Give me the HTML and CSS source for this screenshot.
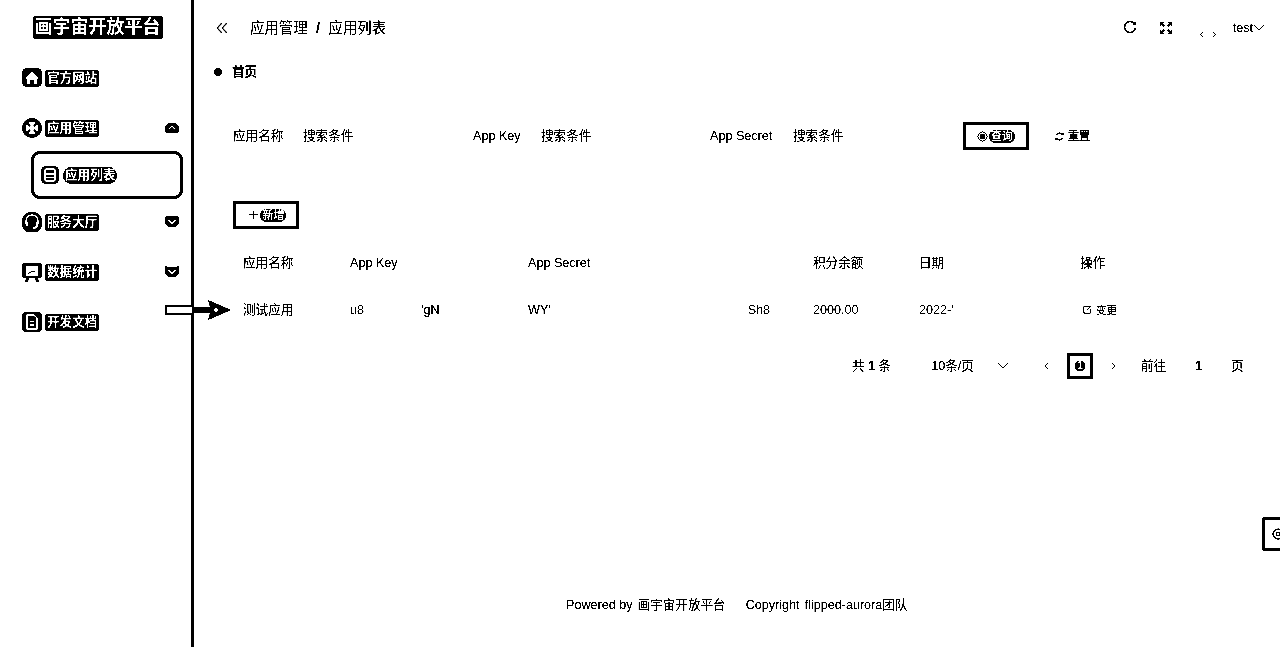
FILE: index.html
```html
<!DOCTYPE html>
<html lang="zh-CN">
<head>
    <meta charset="UTF-8">
    <meta name="viewport" content="width=device-width, initial-scale=1.0">
    <title>画宇宙开放平台</title>
    <link rel="stylesheet" href="styles.css">
</head>
<body>
    <div class="layout">
        <aside class="sidebar">
            <div class="logo"><span>画宇宙开放平台</span></div>
            <nav class="menu">
                <div class="menu-item">
                    <svg class="menu-icon" viewBox="0 0 20 20"><rect x="0" y="0" width="20" height="19" rx="5" fill="#000"/><path d="M3 10 L10 3.500 L17 10 L15 11 V16 H12 V12 H8 V16 H5 V11 Z" fill="#fff"/></svg>
                    <span class="menu-text">官方网站</span>
                </div>
                <div class="menu-item">
                    <svg class="menu-icon" viewBox="0 0 20 20"><circle cx="10" cy="10" r="10" fill="#000"/><circle cx="10" cy="10" r="6.500" fill="#fff"/><path d="M5.500 5.500 L8 8 M14.500 5.500 L12 8 M5.500 14.500 L8 12 M14.500 14.500 L12 12" stroke="#000" stroke-width="2"/></svg>
                    <span class="menu-text">应用管理</span>
                    <svg class="menu-arrow" viewBox="0 0 14 12"><path d="M0 5 L4 1 H10 L14 5 V9 L12 11 H2 L0 9 Z" fill="#000"/><path d="M3.500 7.500 L7 4 L10.500 7.500" fill="none" stroke="#fff" stroke-width="1.500"/></svg>
                </div>
                <div class="submenu-item">
                    <svg class="sub-icon" viewBox="0 0 18 18"><rect x="0" y="0" width="18" height="18" rx="5" fill="#000"/><rect x="4" y="3" width="10" height="12" rx="1" fill="none" stroke="#fff" stroke-width="1.500"/><path d="M4 8 H14 M4 11.500 H14" stroke="#fff" stroke-width="1.500"/></svg>
                    <span class="menu-text pill">应用列表</span>
                </div>
                <div class="menu-item">
                    <svg class="menu-icon" viewBox="0 0 20 20"><rect x="0" y="0" width="20" height="21" rx="9" fill="#000"/><path d="M4 12 V9 A6 6 0 0 1 16 9 V12" fill="none" stroke="#fff" stroke-width="1.500"/><path d="M5 10 V14 M15 10 V13 Q15 16 11 16" fill="none" stroke="#fff" stroke-width="2"/></svg>
                    <span class="menu-text">服务大厅</span>
                    <svg class="menu-arrow" viewBox="0 0 14 12"><path d="M0 2 L2 0 H12 L14 2 V7 L10 11 H4 L0 7 Z" fill="#000"/><path d="M3.500 4 L7 7.500 L10.500 4" fill="none" stroke="#fff" stroke-width="1.500"/></svg>
                </div>
                <div class="menu-item">
                    <svg class="menu-icon" viewBox="0 0 20 20"><rect x="0" y="1" width="20" height="15" rx="2" fill="#000"/><path d="M4 16 L3 20 H6 L7 16 M13 16 L14 20 H17 L16 16" fill="#000"/><rect x="3.500" y="4" width="13" height="10" fill="#fff"/><path d="M6 12 L10 9 L13 10" fill="none" stroke="#000"/></svg>
                    <span class="menu-text">数据统计</span>
                    <svg class="menu-arrow" viewBox="0 0 14 12"><path d="M0 0 L3 1 H11 L14 0 V7 L10 11 H4 L0 7 Z" fill="#000"/><path d="M3.500 4 L7 7.500 L10.500 4" fill="none" stroke="#fff" stroke-width="1.500"/></svg>
                </div>
                <div class="menu-item">
                    <svg class="menu-icon" viewBox="0 0 20 20"><rect x="0" y="0" width="20" height="20" rx="4" fill="#000"/><path d="M5 3 H12 L15 6 V17 H5 Z" fill="none" stroke="#fff" stroke-width="1.500"/><path d="M7.500 9.500 H12.500 M7.500 13 H12.500" stroke="#fff" stroke-width="1.500"/></svg>
                    <span class="menu-text">开发文档</span>
                </div>
            </nav>
        </aside>

        <main class="main">
            <header class="topbar">
                <svg class="collapse" viewBox="0 0 12 12"><path d="M6 1 L1 6 L6 11 M11 1 L6 6 L11 11" fill="none" stroke="#000" stroke-width="1.200"/></svg>
                <div class="breadcrumb">应用管理<span class="sep">/</span>应用列表</div>
                <div class="top-right">
                    <svg class="reload" viewBox="0 0 14 14"><path d="M12 3.500 A5.500 5.500 0 1 0 12.500 7" fill="none" stroke="#000" stroke-width="1.500"/><path d="M9.500 3.500 H13 V0.500 Z" fill="#000"/></svg>
                    <svg class="fullscreen" viewBox="0 0 12 12"><path d="M0 0 H4 L3 1.500 L5 3.500 L3.500 5 L1.500 3 L0 4 Z M12 0 V4 L10.500 3 L8.500 5 L7 3.500 L9 1.500 L8 0 Z M0 12 V8 L1.500 9 L3.500 7 L5 8.500 L3 10.500 L4 12 Z M12 12 H8 L9 10.500 L7 8.500 L8.500 7 L10.500 9 L12 8 Z" fill="#000"/></svg>
                    <div class="avatar-marks">
                        <svg class="mark" viewBox="0 0 3 5"><path d="M2.500 0.500 L0.500 2.500 L2.500 4.500" fill="none" stroke="#000"/></svg>
                        <svg class="mark" viewBox="0 0 3 5"><path d="M0.500 0.500 L2.500 2.500 L0.500 4.500" fill="none" stroke="#000"/></svg>
                    </div>
                    <div class="user">test<svg class="user-arrow" viewBox="0 0 10 6"><path d="M0.500 0.500 L5 5 L9.500 0.500" fill="none" stroke="#000"/></svg></div>
                </div>
            </header>

            <div class="tabs"><i class="tab-dot"></i><span class="tab-name">首页</span></div>

            <form class="search">
                <div class="field field-name"><label>应用名称</label><span>搜索条件</span></div>
                <div class="field field-key"><label>App Key</label><span>搜索条件</span></div>
                <div class="field field-secret"><label>App Secret</label><span>搜索条件</span></div>
                <div class="btn btn-query">
                    <svg class="query-icon" viewBox="0 0 12 12"><circle cx="6" cy="6" r="5" fill="none" stroke="#000"/><circle cx="6" cy="6" r="3" fill="#000"/></svg>
                    <span class="pill-sm">查询</span>
                </div>
                <div class="reset">
                    <svg class="reset-icon" viewBox="0 0 10 10"><path d="M8.500 3 A4 4 0 0 0 1.500 3.500 M1.500 7 A4 4 0 0 0 8.500 6.500" fill="none" stroke="#000" stroke-width="1.200"/><path d="M6.500 3.500 H9.500 V0.500 Z M3.500 6.500 H0.500 V9.500 Z" fill="#000"/></svg>
                    <b>重置</b>
                </div>
            </form>

            <div class="toolbar">
                <div class="btn btn-add"><span class="plus">+</span><span class="pill-sm">新增</span></div>
            </div>

            <div class="table">
                <div class="row row-head">
                    <div>应用名称</div><div>App Key</div><div>App Secret</div><div>积分余额</div><div>日期</div><div>操作</div>
                </div>
                <div class="row">
                    <div>测试应用</div>
                    <div>u8<span class="gap-key">'gN</span></div>
                    <div>WY'<span class="gap-secret">Sh8</span></div>
                    <div>2000.00</div>
                    <div>2022-'</div>
                    <div class="op">
                        <svg class="op-icon" viewBox="0 0 10 10"><path d="M7 1.500 H1 V9 H8.500 V4" fill="none" stroke="#000"/><path d="M4 6 L9 1" stroke="#000" stroke-width="1.200"/></svg>
                        <b>变更</b>
                    </div>
                </div>
            </div>

            <div class="pager">
                <span>共 <b>1</b> 条</span>
                <span class="pager-size">10条/页</span>
                <svg class="pager-arrow" viewBox="0 0 10 6"><path d="M0.500 0.500 L5 5 L9.500 0.500" fill="none" stroke="#000"/></svg>
                <svg class="pager-prev" viewBox="0 0 5 8"><path d="M4 0.500 L1 4 L4 7.500" fill="none" stroke="#000"/></svg>
                <div class="pager-current"><b>1</b></div>
                <svg class="pager-next" viewBox="0 0 5 8"><path d="M1 0.500 L4 4 L1 7.500" fill="none" stroke="#000"/></svg>
                <span class="pager-goto">前往</span>
                <b class="pager-input">1</b>
                <span class="pager-unit">页</span>
            </div>

            <footer class="footer">
                <span>Powered by</span><span class="footer-name">画宇宙开放平台</span><span class="footer-copy">Copyright</span><span class="footer-team">flipped-aurora团队</span>
            </footer>
        </main>
    </div>

    <svg class="arrow" viewBox="0 0 67 22"><path d="M1 7 H28 V15 H1 Q0 11 1 7 Z" fill="#fff" stroke="#000" stroke-width="2"/><path d="M29 8 H45 L43 1 L66 11 L43 21 L45 14 H29 Z" fill="#000"/><circle cx="51" cy="11" r="2" fill="#fff"/></svg>

    <div class="side-tab">
        <svg class="side-icon" viewBox="0 0 12 12"><circle cx="6" cy="6" r="5" fill="none" stroke="#000" stroke-width="1.200"/><circle cx="6" cy="6" r="2" fill="none" stroke="#000"/></svg>
    </div>
</body>
</html>
```

FILE: styles.css
```css
html, body {
    margin: 0;
    height: 100%;
    overflow: hidden;
    background-color: #fff;
}

body {
    position: relative;
    font-family: "Liberation Sans", "Noto Sans CJK SC", sans-serif;
    font-size: 12.600px;
    line-height: 18px;
    color: #000;
    filter: grayscale(1) brightness(0.85) contrast(12);
}

.layout {
    display: flex;
    height: 647px;
}

/* sidebar */
.sidebar {
    width: 191px;
    flex-shrink: 0;
    border-right: 3px solid #000;
}

.logo {
    height: 55px;
    display: flex;
    align-items: center;
    justify-content: center;
    padding-left: 4px;
}

.logo span {
    background-color: #000;
    color: #fff;
    font-size: 18px;
    font-weight: bold;
    line-height: 23px;
    padding: 0 2px;
    border-radius: 3px;
}

.menu-item {
    height: 46px;
    margin-top: 4px;
    display: flex;
    align-items: center;
    padding-left: 22px;
    padding-right: 12px;
}

.menu-item:first-child {
    margin-top: 0;
}

.submenu-item + .menu-item {
    margin-top: 0;
}

.menu-icon {
    width: 20px;
    height: 20px;
    margin-right: 3px;
}

.menu-text {
    background-color: #000;
    color: #fff;
    font-weight: bold;
    line-height: 17px;
    padding: 0 2px;
    border-radius: 3px;
    white-space: nowrap;
}

.menu-arrow {
    width: 14px;
    height: 12px;
    margin-left: auto;
}

.submenu-item {
    box-sizing: border-box;
    height: 48px;
    width: 152px;
    margin-left: 31px;
    border: 3px solid #000;
    border-radius: 9px;
    display: flex;
    align-items: center;
    padding-left: 7px;
}

.sub-icon {
    width: 18px;
    height: 18px;
    margin-right: 4px;
}

.pill {
    border-radius: 9px;
    padding: 0 2px;
}

/* main area */
.main {
    flex: 1;
    min-width: 0;
    padding-left: 39px;
}

.topbar {
    height: 55px;
    display: flex;
    align-items: center;
    margin-left: -17px;
}

.collapse {
    width: 12px;
    height: 12px;
    margin-right: 22px;
}

.breadcrumb {
    font-size: 14.400px;
    white-space: nowrap;
}

.sep {
    margin: 0 8.500px;
    font-weight: bold;
}

.top-right {
    margin-left: auto;
    display: flex;
    align-items: center;
    padding-right: 16px;
}

.reload {
    width: 14px;
    height: 14px;
}

.fullscreen {
    width: 12px;
    height: 12px;
    margin-left: 23px;
}

.avatar-marks {
    display: flex;
    gap: 10px;
    margin-left: 28px;
    margin-top: 14px;
}

.mark {
    width: 3px;
    height: 5px;
}

.user {
    display: flex;
    align-items: center;
    margin-left: 17px;
}

.user-arrow {
    width: 10px;
    height: 6px;
    margin-left: 1px;
}

.tabs {
    height: 34px;
    display: flex;
    align-items: center;
    margin-left: -19px;
}

.tab-dot {
    width: 8px;
    height: 8px;
    border-radius: 50%;
    background-color: #000;
    margin-right: 10px;
}

.tab-name {
    font-weight: bold;
}

/* search form */
.search {
    display: flex;
    align-items: center;
    height: 28px;
    margin-top: 33px;
}

.field {
    display: flex;
    align-items: center;
    white-space: nowrap;
}

.field label {
    display: block;
}

.field-name {
    width: 240px;
}

.field-name label {
    width: 70px;
}

.field-key {
    width: 237px;
}

.field-key label {
    width: 68px;
}

.field-secret {
    width: 253px;
}

.field-secret label {
    width: 83px;
}

.btn {
    box-sizing: border-box;
    height: 28px;
    width: 66px;
    border: 3px solid #000;
    display: flex;
    align-items: center;
    justify-content: center;
}

.query-icon {
    width: 11px;
    height: 11px;
    margin-right: 1px;
}

.pill-sm {
    background-color: #000;
    color: #fff;
    font-size: 11px;
    font-weight: bold;
    line-height: 13px;
    padding: 0 2px;
    border-radius: 7px;
}

.reset {
    display: flex;
    align-items: center;
    margin-left: 26px;
    font-size: 11px;
}

.reset-icon {
    width: 9px;
    height: 9px;
    margin-right: 4px;
}

.toolbar {
    margin-top: 51px;
    height: 28px;
}

.btn-add {
    padding-left: 3px;
}

.plus {
    margin-right: 2px;
    font-size: 17px;
    font-weight: normal;
}

/* table */
.table {
    margin-top: 11px;
}

.row {
    display: grid;
    grid-template-columns: 107px 178px 285px 106px 161px 1fr;
    padding-left: 10px;
    height: 47px;
    align-items: center;
    white-space: nowrap;
}

.row-head {
    height: 46px;
}

.gap-key {
    margin-left: 57px;
}

.gap-secret {
    margin-left: 197px;
}

.op {
    display: flex;
    align-items: center;
    padding-left: 3px;
    font-size: 10.500px;
}

.op-icon {
    width: 9px;
    height: 9px;
    margin-right: 4px;
}

.op b {
    font-weight: normal;
}

/* pagination */
.pager {
    display: flex;
    align-items: center;
    height: 26px;
    margin-top: 20px;
    padding-left: 619px;
    white-space: nowrap;
}

.pager-size {
    margin-left: 40px;
}

.pager-arrow {
    width: 10px;
    height: 6px;
    margin-left: 24px;
}

.pager-prev {
    width: 5px;
    height: 8px;
    margin-left: 36px;
}

.pager-current {
    box-sizing: border-box;
    width: 26px;
    height: 26px;
    margin-left: 18px;
    border: 3px solid #000;
    display: flex;
    align-items: center;
    justify-content: center;
}

.pager-current b {
    background-color: #000;
    color: #fff;
    font-size: 10px;
    line-height: 10px;
    padding: 0 2px;
    border-radius: 4px;
}

.pager-next {
    width: 5px;
    height: 8px;
    margin-left: 18px;
}

.pager-goto {
    margin-left: 25px;
}

.pager-input {
    margin-left: 29px;
}

.pager-unit {
    margin-left: 29px;
}

/* footer */
.footer {
    display: flex;
    margin-top: 217px;
    padding-left: 333px;
    white-space: nowrap;
}

.footer-name {
    margin-left: 5px;
}

.footer-copy {
    margin-left: 20px;
}

.footer-team {
    margin-left: 5px;
}

/* things lying over the page */
.arrow {
    position: absolute;
    left: 165px;
    top: 299px;
    width: 67px;
    height: 22px;
}

.side-tab {
    position: absolute;
    right: 0;
    top: 517px;
    box-sizing: border-box;
    width: 18px;
    height: 34px;
    border: 3px solid #000;
    border-right: none;
    border-radius: 3px 0 0 3px;
    display: flex;
    align-items: center;
    padding-left: 7px;
}

.side-icon {
    width: 12px;
    height: 12px;
    flex-shrink: 0;
}
```
